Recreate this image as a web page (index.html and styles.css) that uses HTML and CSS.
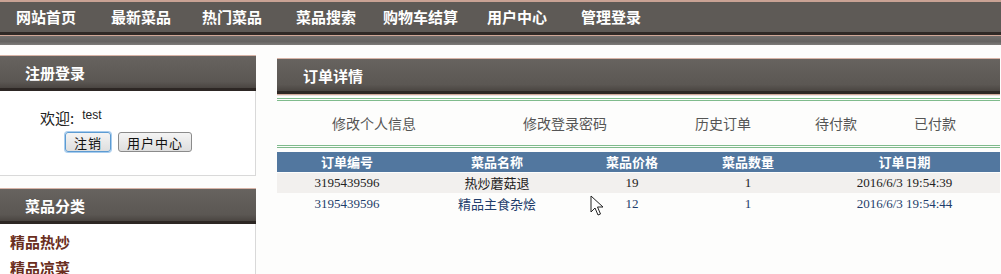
FILE: index.html
```html
<!DOCTYPE html>
<html lang="zh-CN">
<head>
    <meta charset="UTF-8">
    <title>订单详情</title>
    <link rel="stylesheet" href="styles.css">
</head>
<body>
    <nav class="nav">
        <a href="#">网站首页</a>
        <a href="#">最新菜品</a>
        <a href="#">热门菜品</a>
        <a href="#">菜品搜索</a>
        <a href="#">购物车结算</a>
        <a href="#">用户中心</a>
        <a href="#">管理登录</a>
    </nav>
    <div class="nav-band"></div>

    <div class="page">
        <aside class="side">
            <section class="box">
                <h2 class="box-head">注册登录</h2>
                <div class="box-body login">
                    <p class="welcome">欢迎:<span class="user">test</span></p>
                    <div class="btns">
                        <button class="btn focus">注销</button>
                        <button class="btn">用户中心</button>
                    </div>
                </div>
            </section>
            <section class="box">
                <h2 class="box-head">菜品分类</h2>
                <ul class="box-body cats">
                    <li>精品热炒</li>
                    <li>精品凉菜</li>
                </ul>
            </section>
        </aside>

        <main class="content">
            <h2 class="box-head wide">订单详情</h2>
            <div class="links">
                <a href="#" class="l1">修改个人信息</a>
                <a href="#" class="l2">修改登录密码</a>
                <a href="#" class="l3">历史订单</a>
                <a href="#" class="l4">待付款</a>
                <a href="#" class="l5">已付款</a>
            </div>
            <table class="orders">
                <colgroup>
                    <col style="width:140px">
                    <col style="width:160px">
                    <col style="width:110px">
                    <col style="width:122px">
                    <col>
                </colgroup>
                <thead>
                    <tr><th>订单编号</th><th>菜品名称</th><th>菜品价格</th><th>菜品数量</th><th>订单日期</th></tr>
                </thead>
                <tbody>
                    <tr class="odd"><td>3195439596</td><td>热炒蘑菇退</td><td>19</td><td>1</td><td>2016/6/3 19:54:39</td></tr>
                    <tr class="even"><td>3195439596</td><td>精品主食杂烩</td><td>12</td><td>1</td><td>2016/6/3 19:54:44</td></tr>
                </tbody>
            </table>
        </main>
    </div>

    <svg class="cursor" width="14" height="22" viewBox="0 0 14 22">
        <path d="M1 1 L1 17 L5 13 L8 20 L10.5 19 L7.5 12 L13 12 Z" fill="#fff" stroke="#222" stroke-width="1"/>
    </svg>
</body>
</html>
```

FILE: styles.css
```css
* {
    box-sizing: border-box;
}

body {
    margin: 0;
    background: #fdfdfc;
    font-family: "Noto Sans CJK SC", "Liberation Sans", sans-serif;
    color: #333;
    position: relative;
    overflow: hidden;
}

.nav {
    height: 35px;
    display: flex;
    align-items: center;
    padding: 0 0 1px 16px;
    background: #5e5a56;
    border-top: 2px solid #c9a294;
    border-bottom: 3px solid #2f2926;
    box-shadow: 0 1px 0 #cfa696;
}

.nav a {
    color: #fff;
    font-size: 15px;
    font-weight: bold;
    text-decoration: none;
    line-height: 1;
}

.nav a:nth-child(2) { margin-left: 35px; }
.nav a:nth-child(3) { margin-left: 31px; }
.nav a:nth-child(4) { margin-left: 34px; }
.nav a:nth-child(5) { margin-left: 27px; }
.nav a:nth-child(6) { margin-left: 29px; }
.nav a:nth-child(7) { margin-left: 34px; }

.nav-band {
    height: 9px;
    margin-top: 1px;
    background: linear-gradient(#73706e, #646260 60%, #7e7c7a);
}

.page {
    display: flex;
    align-items: flex-start;
    margin-top: 10px;
}

.side {
    width: 256px;
    display: flex;
    flex-direction: column;
    gap: 12px;
}

.box-head {
    margin: 0;
    height: 36px;
    padding-left: 25px;
    display: flex;
    align-items: center;
    font-size: 15px;
    font-weight: bold;
    color: #fff;
    background: linear-gradient(#67635f, #5b5753 80%, #4a4541);
    border-top: 1px solid #d7b3a6;
    border-bottom: 3px solid #2d2724;
    box-shadow: 0 1px 0 #d2aa9b, 0 2px 0 #e8e2de;
}

.box-body {
    border-right: 1px solid #d9d9d9;
    border-bottom: 1px solid #d9d9d9;
    background: #fff;
    margin: 0;
}

.login {
    height: 85px;
    padding: 16px 0 0 40px;
}

.welcome {
    margin: 0;
    font-size: 15px;
    color: #222;
}

.user {
    font-family: "Liberation Sans", sans-serif;
    font-size: 12px;
    margin-left: 8px;
    vertical-align: 5px;
}

.btns {
    display: flex;
    gap: 7px;
    margin: 4px 0 0 25px;
}

.btn {
    height: 20px;
    padding: 0 8px;
    font-family: "Noto Sans CJK SC", sans-serif;
    font-size: 13px;
    line-height: 1;
    letter-spacing: 1px;
    color: #111;
    background: linear-gradient(#f4f4f4, #dedede);
    border: 1px solid #8b8b8b;
    border-radius: 3px;
}

.btn.focus {
    border-color: #5c9bd2;
    box-shadow: 0 0 0 1px #a9cdee;
}

.cats {
    list-style: none;
    padding: 5px 0 0 10px;
    border-bottom: none;
}

.cats li {
    height: 26px;
    line-height: 26px;
    font-size: 15px;
    font-weight: bold;
    color: #6a2e20;
}

.content {
    flex: 1;
    margin: 3px 1px 0 21px;
}

.wide {
    padding-left: 26px;
}

.links {
    margin-top: 4px;
    height: 50px;
    display: flex;
    align-items: center;
    border-top: 3px double #7fbb8c;
    border-bottom: 3px double #7fbb8c;
    font-size: 14px;
}

.links a {
    color: #555;
    text-decoration: none;
}

.l1 { margin-left: 55px; }
.l2 { margin-left: 107px; }
.l3 { margin-left: 88px; }
.l4 { margin-left: 64px; }
.l5 { margin-left: 57px; }

.orders {
    width: 100%;
    margin-top: 4px;
    border-collapse: collapse;
    table-layout: fixed;
    font-size: 13px;
}

.orders th {
    height: 20px;
    background: #52779f;
    color: #fff;
    font-weight: bold;
    padding: 0;
}

.orders td {
    height: 21px;
    text-align: center;
    padding: 0;
    font-family: "Liberation Serif", "Noto Sans CJK SC", serif;
    font-size: 13px;
}

.orders tr.odd td {
    background: #f2f0ee;
    color: #222;
    border-top: 1px solid #fdfdfc;
}

.orders tr.even td {
    color: #1f3d6b;
    border-top: 1px solid #fdfdfc;
}

.cursor {
    position: absolute;
    left: 590px;
    top: 195px;
}
```
